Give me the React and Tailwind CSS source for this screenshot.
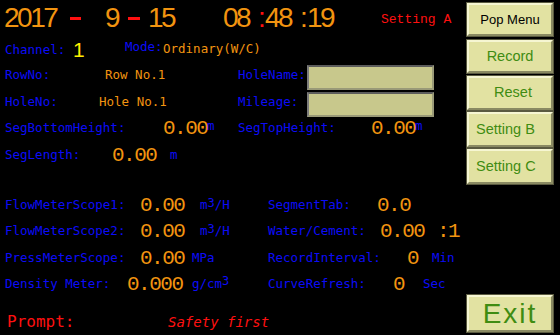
import React from "react";

const mono = { fontFamily: '"Liberation Mono", monospace' };
const dmono = { fontFamily: '"DejaVu Sans Mono", "Liberation Mono", monospace' };
const sans = { fontFamily: '"Liberation Sans", Arial, sans-serif' };

function Lbl({ w, children, className = "" }) {
  return (
    <span className={`shrink-0 whitespace-nowrap text-[12.5px] text-[#0c0cf8] ${className}`} style={{ ...dmono, width: w }}>
      {children}
    </span>
  );
}
function Val({ w, children, className = "" }) {
  return (
    <span className={`shrink-0 whitespace-nowrap text-[21px] tracking-[-1.5px] text-[#f29410] leading-none ${className}`} style={{ ...mono, width: w }}>
      {children}
    </span>
  );
}
function SmallVal({ w, children }) {
  return (
    <span className="shrink-0 whitespace-nowrap text-[12.5px] text-[#f29410]" style={{ ...dmono, width: w }}>
      {children}
    </span>
  );
}

function Btn({ children, className = "", textClass = "" }) {
  return (
    <div
      className={`w-[86px] flex items-center bg-[#e2e2a2] border-2 border-t-[#f6f6d2] border-l-[#f6f6d2] border-b-[#8a8a62] border-r-[#8a8a62] outline outline-1 outline-[#5a5a40] ${className}`}
      style={sans}
    >
      <span className={`whitespace-nowrap ${textClass}`}>{children}</span>
    </div>
  );
}

function Box() {
  return (
    <div className="w-[127px] h-[25px] bg-[#c8c88c] border-2 border-t-[#5c5c5c] border-l-[#7c7c7c] border-b-[#9a9a78] border-r-[#9a9a78] shrink-0" />
  );
}

export default function App() {
  return (
    <div className="w-[560px] h-[335px] bg-black flex overflow-hidden">
      {/* main area */}
      <div className="w-[467px] flex flex-col">
        {/* date row */}
        <div className="h-[36px] flex items-center pl-[4px] text-[28px] tracking-[-2.5px] text-[#f29410]" style={sans}>
          <span className="w-[66px] shrink-0">2017</span>
          <span className="w-[35px] shrink-0 flex items-center h-full pt-[1px]"><span className="w-[11px] h-[3px] bg-[#ff1010]" /></span>
          <span className="w-[23px] shrink-0">9</span>
          <span className="w-[20px] shrink-0 flex items-center h-full pt-[1px]"><span className="w-[12px] h-[3px] bg-[#ff1010]" /></span>
          <span className="w-[75px] shrink-0">15</span>
          <span className="w-[35px] shrink-0">08</span>
          <span className="w-[7px] shrink-0 text-[#ff1010]">:</span>
          <span className="w-[35px] shrink-0">48</span>
          <span className="w-[7px] shrink-0">:</span>
          <span className="w-[74px] shrink-0">19</span>
          <span className="text-[13px] tracking-normal text-[#ff1010] whitespace-nowrap pt-[3px]" style={mono}>Setting A</span>
        </div>

        {/* channel row */}
        <div className="h-[26px] flex items-center pl-[5px]">
          <Lbl w="68px" className="pt-[2px]">Channel:</Lbl>
          <span className="w-[52px] shrink-0 text-[21px] leading-none text-[#ffee00]" style={sans}>1</span>
          <Lbl w="38px" className="pb-[4px]">Mode:</Lbl>
          <span className="pb-[4px]"><SmallVal w="120px">Ordinary(W/C)</SmallVal></span>
        </div>

        {/* RowNo */}
        <div className="h-[27px] flex items-center pl-[5px]">
          <Lbl w="100px">RowNo:</Lbl>
          <SmallVal w="133px">Row No.1</SmallVal>
          <Lbl w="69px">HoleName:</Lbl>
          <div className="mt-[3px]"><Box /></div>
        </div>

        {/* HoleNo */}
        <div className="h-[26px] flex items-center pl-[5px]">
          <Lbl w="94px">HoleNo:</Lbl>
          <SmallVal w="139px">Hole No.1</SmallVal>
          <Lbl w="69px">Mileage:</Lbl>
          <div className="mt-[4px]"><Box /></div>
        </div>

        {/* SegBottomHeight */}
        <div className="h-[27px] flex items-center pl-[5px]">
          <Lbl w="158px">SegBottomHeight:</Lbl>
          <Val w="44px">0.00</Val>
          <Lbl w="31px" className="pb-[5px]">m</Lbl>
          <Lbl w="133px">SegTopHeight:</Lbl>
          <Val w="44px">0.00</Val>
          <Lbl w="20px" className="pb-[5px]">m</Lbl>
        </div>

        {/* SegLength */}
        <div className="h-[26px] flex items-center pl-[5px]">
          <Lbl w="107px">SegLength:</Lbl>
          <Val w="58px">0.00</Val>
          <Lbl w="20px">m</Lbl>
        </div>

        <div className="h-[24px]" />

        {/* FM1 */}
        <div className="h-[26px] flex items-center pl-[5px]">
          <Lbl w="135px">FlowMeterScope1:</Lbl>
          <Val w="60px">0.00</Val>
          <Lbl w="68px">m<sup className="text-[12px] relative top-[-2px]">3</sup>/H</Lbl>
          <Lbl w="109px">SegmentTab:</Lbl>
          <Val w="40px">0.0</Val>
        </div>

        {/* FM2 */}
        <div className="h-[27px] flex items-center pl-[5px]">
          <Lbl w="135px">FlowMeterScope2:</Lbl>
          <Val w="60px">0.00</Val>
          <Lbl w="68px">m<sup className="text-[12px] relative top-[-2px]">3</sup>/H</Lbl>
          <Lbl w="112px">Water/Cement:</Lbl>
          <Val w="57px">0.00</Val>
          <Val w="30px">:1</Val>
        </div>

        {/* Press */}
        <div className="h-[26px] flex items-center pl-[5px]">
          <Lbl w="135px">PressMeterScope:</Lbl>
          <Val w="52px">0.00</Val>
          <Lbl w="76px">MPa</Lbl>
          <Lbl w="139px">RecordInterval:</Lbl>
          <Val w="25px">0</Val>
          <Lbl w="30px">Min</Lbl>
        </div>

        {/* Density */}
        <div className="h-[27px] flex items-center pl-[5px]">
          <Lbl w="122px">Density Meter:</Lbl>
          <Val w="65px">0.000</Val>
          <Lbl w="76px">g/cm<sup className="text-[12px] relative top-[-3px]">3</sup></Lbl>
          <Lbl w="125px">CurveRefresh:</Lbl>
          <Val w="30px">0</Val>
          <Lbl w="30px">Sec</Lbl>
        </div>

        <div className="h-[11px]" />

        {/* Prompt */}
        <div className="h-[26px] flex items-center pl-[7px]">
          <span className="w-[161px] shrink-0 text-[16px] text-[#ff1010]" style={dmono}>Prompt:</span>
          <span className="text-[14px] italic text-[#ff1010] whitespace-nowrap" style={dmono}>Safety first</span>
        </div>
      </div>

      {/* right buttons */}
      <div className="w-[93px] flex flex-col pt-[3px] pb-[3px]">
        <Btn className="h-[33px] justify-center" textClass="text-[13px] text-black">Pop Menu</Btn>
        <Btn className="h-[33px] mt-[4px] justify-center" textClass="text-[14.5px] text-[#3f8c12]">Record</Btn>
        <Btn className="h-[34px] mt-[3px] justify-center pl-[6px]" textClass="text-[14.5px] text-[#3f8c12]">Reset</Btn>
        <Btn className="h-[35px] mt-[2px] pl-[7px]" textClass="text-[14.5px] text-[#3f8c12]">Setting B</Btn>
        <Btn className="h-[35px] mt-[2px] pl-[7px]" textClass="text-[14.5px] text-[#3f8c12]">Setting C</Btn>
        <Btn className="h-[37px] mt-auto justify-center" textClass="text-[28px] tracking-[2px] text-[#3f8c12]">Exit</Btn>
      </div>
    </div>
  );
}
